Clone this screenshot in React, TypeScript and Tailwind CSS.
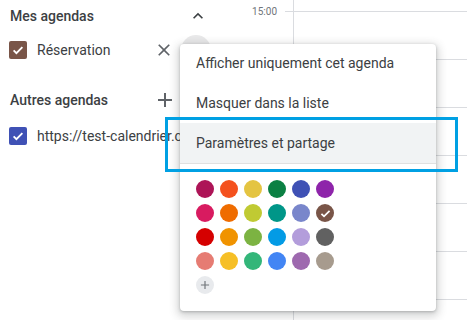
import { useState } from 'react';

const colors = [
  ['#ad1457', '#f4511e', '#e4c441', '#0b8043', '#3f51b5', '#8e24aa'],
  ['#d81b60', '#ef6c00', '#c0ca33', '#009688', '#7986cb', '#795548'],
  ['#d50000', '#f09300', '#7cb342', '#039be5', '#b39ddb', '#616161'],
  ['#e67c73', '#f6bf26', '#33b679', '#4285f4', '#9e69af', '#a79b8e'],
];

const menuItems = ['Afficher uniquement cet agenda', 'Masquer dans la liste', 'Paramètres et partage'];

function Check({ size = 14 }: { size?: number }) {
  return (
    <svg width={size} height={size} viewBox="0 0 24 24" fill="none">
      <path d="M4.5 12.5l4.8 4.8L19.5 7" stroke="#fff" strokeWidth="3.2" />
    </svg>
  );
}

function CheckBox({ color }: { color: string }) {
  return (
    <div className="w-[18px] h-[18px] rounded-[2px] flex items-center justify-center" style={{ backgroundColor: color }}>
      <Check />
    </div>
  );
}

export default function App() {
  const [selected, setSelected] = useState('#795548');

  return (
    <div className="relative w-[467px] h-[320px] overflow-hidden bg-white flex text-[#3c4043]" style={{ fontFamily: 'Roboto, "Noto Sans", sans-serif' }}>
      {/* barre latérale */}
      <div className="w-[240px] pl-[9px] flex flex-col">
        <div className="h-8 flex items-center">
          <span className="ml-px text-[14px] font-medium">Mes agendas</span>
          <svg className="ml-auto mr-[32px]" width="20" height="20" viewBox="0 0 24 24">
            <path d="M12 8l-6 6 1.41 1.41L12 10.83l4.59 4.58L18 14z" fill="#3c4043" />
          </svg>
        </div>
        <div className="h-9 flex items-center">
          <CheckBox color="#795548" />
          <span className="ml-[10px] text-[14px]">Réservation</span>
          <svg className="ml-auto" width="20" height="20" viewBox="0 0 24 24">
            <path d="M19 6.41L17.59 5 12 10.59 6.41 5 5 6.41 10.59 12 5 17.59 6.41 19 12 13.41 17.59 19 19 17.59 13.41 12z" fill="#5f6368" />
          </svg>
          <div className="ml-[7px] mr-[29px] w-[30px] h-[30px] rounded-full bg-[#e9e9ea]" />
        </div>
        <div className="h-[14px]" />
        <div className="h-9 flex items-center">
          <span className="ml-px text-[14px] font-medium">Autres agendas</span>
          <svg className="ml-auto mr-[63px]" width="24" height="24" viewBox="0 0 24 24">
            <path d="M19 13h-6v6h-2v-6H5v-2h6V5h2v6h6v2z" fill="#5f6368" />
          </svg>
        </div>
        <div className="h-9 flex items-center whitespace-nowrap">
          <CheckBox color="#3f51b5" />
          <span className="ml-[10px] text-[14px]">https://test-calendrier.com</span>
        </div>
      </div>

      {/* heures */}
      <div className="w-[53px] shrink-0 relative">
        <div className="flex items-center h-[22px] justify-end">
          <span className="text-[10px] text-[#70757a] mr-[8px]">15:00</span>
          <div className="w-[8px] h-px bg-[#dadce0]" />
        </div>
      </div>

      {/* grille */}
      <div className="flex-1 border-l border-[#dadce0] flex flex-col pt-[11px]">
        {Array.from({ length: 7 }, (_, i) => (
          <div key={i} className="h-12 shrink-0 border-t border-[#dadce0]" />
        ))}
      </div>

      {/* menu */}
      <div className="absolute left-[180px] top-[44px] w-[256px] h-[267px] bg-white rounded-[4px] shadow-[0_3px_8px_3px_rgba(60,64,67,0.2),0_1px_3px_0_rgba(60,64,67,0.3)] flex flex-col">
        <div className="-mt-px" />
        {menuItems.map((item, i) => (
          <div key={item} className={`h-10 shrink-0 flex items-center px-4 text-[14px] ${i === 2 ? 'bg-[#f1f3f4]' : ''}`}>
            {item}
          </div>
        ))}
        <div className="h-px bg-[#e0e0e0]" />
        <div className="pt-[16px] pl-[16px] flex flex-col gap-[6px]">
          {colors.map((row, r) => (
            <div key={r} className="flex gap-[6px]">
              {row.map(c => (
                <button
                  key={c}
                  onClick={() => setSelected(c)}
                  className="w-[18px] h-[18px] rounded-full flex items-center justify-center"
                  style={{ backgroundColor: c }}
                >
                  {selected === c && <Check size={13} />}
                </button>
              ))}
            </div>
          ))}
          <div className="w-[18px] h-[18px] rounded-full bg-[#e8eaed] flex items-center justify-center">
            <svg width="14" height="14" viewBox="0 0 24 24">
              <path d="M19 13h-6v6h-2v-6H5v-2h6V5h2v6h6v2z" fill="#70757a" />
            </svg>
          </div>
        </div>
      </div>

      {/* encadré bleu */}
      <div className="absolute left-[165px] top-[117px] w-[293px] h-[55px] border-[3px] border-[#00a0e3]" />
    </div>
  );
}
